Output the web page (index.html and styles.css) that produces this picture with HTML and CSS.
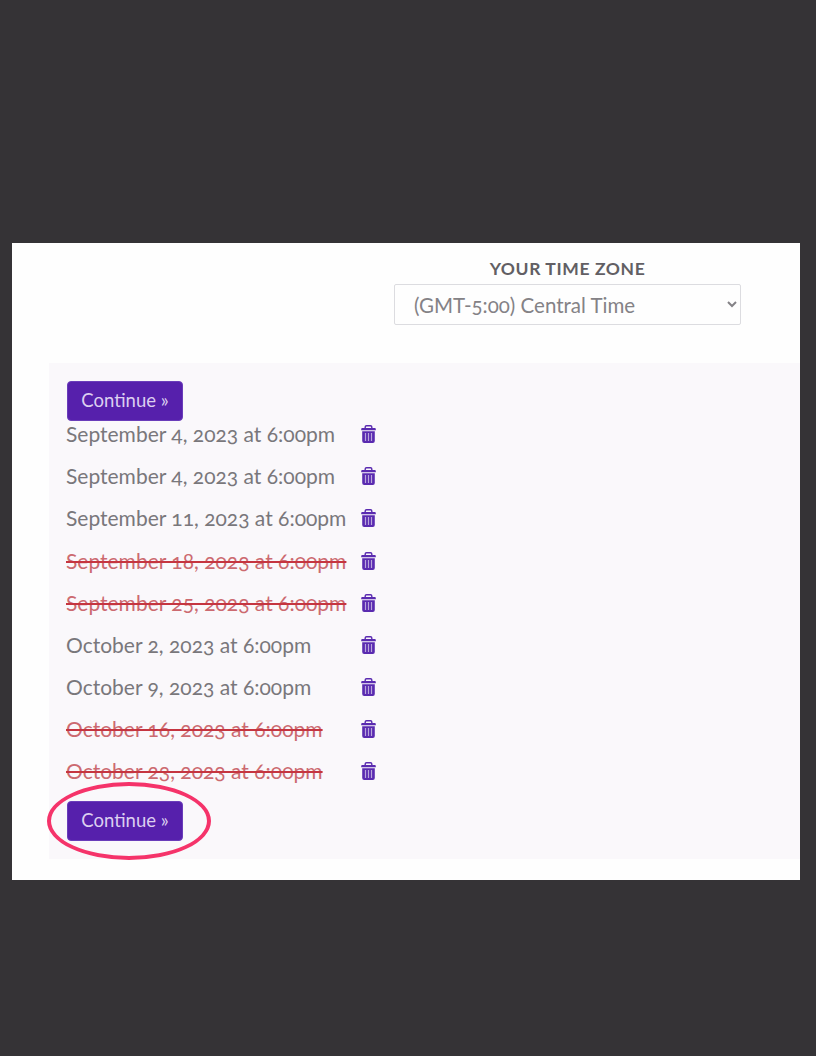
FILE: index.html
```html
<!DOCTYPE html>
<html lang="en">
<head>
  <meta charset="UTF-8">
  <title>Select dates</title>
  <link rel="stylesheet" href="styles.css">
</head>
<body>
  <svg class="sprite" width="0" height="0">
    <symbol id="trash" viewBox="0 0 15 18">
      <path fill-rule="evenodd" d="M5.500 0h4a2 2 0 0 1 2 2v1h2.300a1 1 0 0 1 1 1v1.200H.2V4a1 1 0 0 1 1-1h2.300V2a2 2 0 0 1 2-2z M5.500 1.500a.6.6 0 0 0-.6.6V3h5.200v-.9a.6.6 0 0 0-.6-.6z" fill="#5a2bb0"/>
      <path d="M1.200 6.200h12.600V16a2 2 0 0 1-2 2H3.200a2 2 0 0 1-2-2z" fill="#5a2bb0"/>
      <path d="M4.500 8v8M7.500 8v8M10.500 8v8" stroke="#b9a5dc" stroke-width="1.200"/>
    </symbol>
  </svg>

  <main class="panel">
    <div class="zone">
      <label class="zone-label" for="zone">YOUR TIME ZONE</label>
      <select id="zone" class="zone-select">
        <option>(GMT-5:00) Central Time</option>
      </select>
    </div>

    <section class="dates">
      <button class="continue" type="button">Continue »</button>
      <ul class="date-list">
        <li class="date-row"><span class="date-text">September 4, 2023 at 6:00pm</span><svg class="trash"><use href="#trash"/></svg></li>
        <li class="date-row"><span class="date-text">September 4, 2023 at 6:00pm</span><svg class="trash"><use href="#trash"/></svg></li>
        <li class="date-row"><span class="date-text">September 11, 2023 at 6:00pm</span><svg class="trash"><use href="#trash"/></svg></li>
        <li class="date-row"><span class="date-text removed">September 18, 2023 at 6:00pm</span><svg class="trash"><use href="#trash"/></svg></li>
        <li class="date-row"><span class="date-text removed">September 25, 2023 at 6:00pm</span><svg class="trash"><use href="#trash"/></svg></li>
        <li class="date-row"><span class="date-text">October 2, 2023 at 6:00pm</span><svg class="trash"><use href="#trash"/></svg></li>
        <li class="date-row"><span class="date-text">October 9, 2023 at 6:00pm</span><svg class="trash"><use href="#trash"/></svg></li>
        <li class="date-row"><span class="date-text removed">October 16, 2023 at 6:00pm</span><svg class="trash"><use href="#trash"/></svg></li>
        <li class="date-row"><span class="date-text removed">October 23, 2023 at 6:00pm</span><svg class="trash"><use href="#trash"/></svg></li>
      </ul>
      <div class="continue-wrap">
        <button class="continue" type="button">Continue »</button>
        <span class="highlight"></span>
      </div>
    </section>
  </main>
</body>
</html>
```
FILE: styles.css
```css
/* Page */
body {
  margin: 0;
  padding: 243px 16px 0 12px;
  height: 1056px;
  box-sizing: border-box;
  background-color: #353336;
  font-family: "Lato", "Open Sans", sans-serif;
  font-variant-numeric: oldstyle-nums;
  color: #79777b;
}

.sprite {
  display: block;
}

.panel {
  background-color: #fefefe;
  height: 637px;
  padding: 0 0 21px 37px;
  box-sizing: border-box;
  display: flex;
  flex-direction: column;
}

/* Time zone */
.zone {
  width: 347px;
  margin: 16px 0 38px 345px;
  display: flex;
  flex-direction: column;
  align-items: center;
  gap: 6px;
}

.zone-label {
  font-size: 17.5px;
  font-weight: 700;
  line-height: 19px;
  letter-spacing: 0.6px;
  color: #625f64;
}

.zone-select {
  width: 100%;
  height: 41px;
  padding: 0 0 0 15px;
  background-color: #fefefe;
  border: 1px solid #dcdce0;
  border-radius: 2px;
  font-family: inherit;
  font-variant-numeric: inherit;
  font-size: 20.5px;
  color: #848286;
}

/* Dates */
.dates {
  flex: 1;
  background-color: #faf8fb;
  padding: 18px 0 0 18px;
}

.continue {
  display: block;
  width: 116px;
  height: 40px;
  padding: 0 0 2px;
  background-color: #5620ac;
  color: #dccff0;
  border: 1px solid #6a3dba;
  border-radius: 4px;
  font-family: inherit;
  font-size: 18.5px;
}

.date-list {
  list-style: none;
  margin: 0;
  padding: 0;
}

.date-row {
  height: 26px;
  margin-bottom: 16px;
  display: flex;
  align-items: center;
  font-size: 21px;
  position: relative;
}

.date-row:nth-child(3) {
  margin-bottom: 17px;
}

.date-text {
  margin: -2px 0 0 -1px;
}

.date-text.removed {
  color: #cc6a70;
  text-decoration: line-through;
  text-decoration-color: #c53540;
  text-decoration-thickness: 1.5px;
}

.trash {
  position: absolute;
  left: 294px;
  top: 4px;
  width: 15px;
  height: 18px;
}

.continue-wrap {
  position: relative;
  margin-top: 17px;
}

/* Hand-drawn ring over the lower button */
.highlight {
  position: absolute;
  left: -20px;
  top: -19px;
  width: 164px;
  height: 78px;
  box-sizing: border-box;
  border: 4.5px solid #f5336a;
  border-radius: 50%;
}
```
